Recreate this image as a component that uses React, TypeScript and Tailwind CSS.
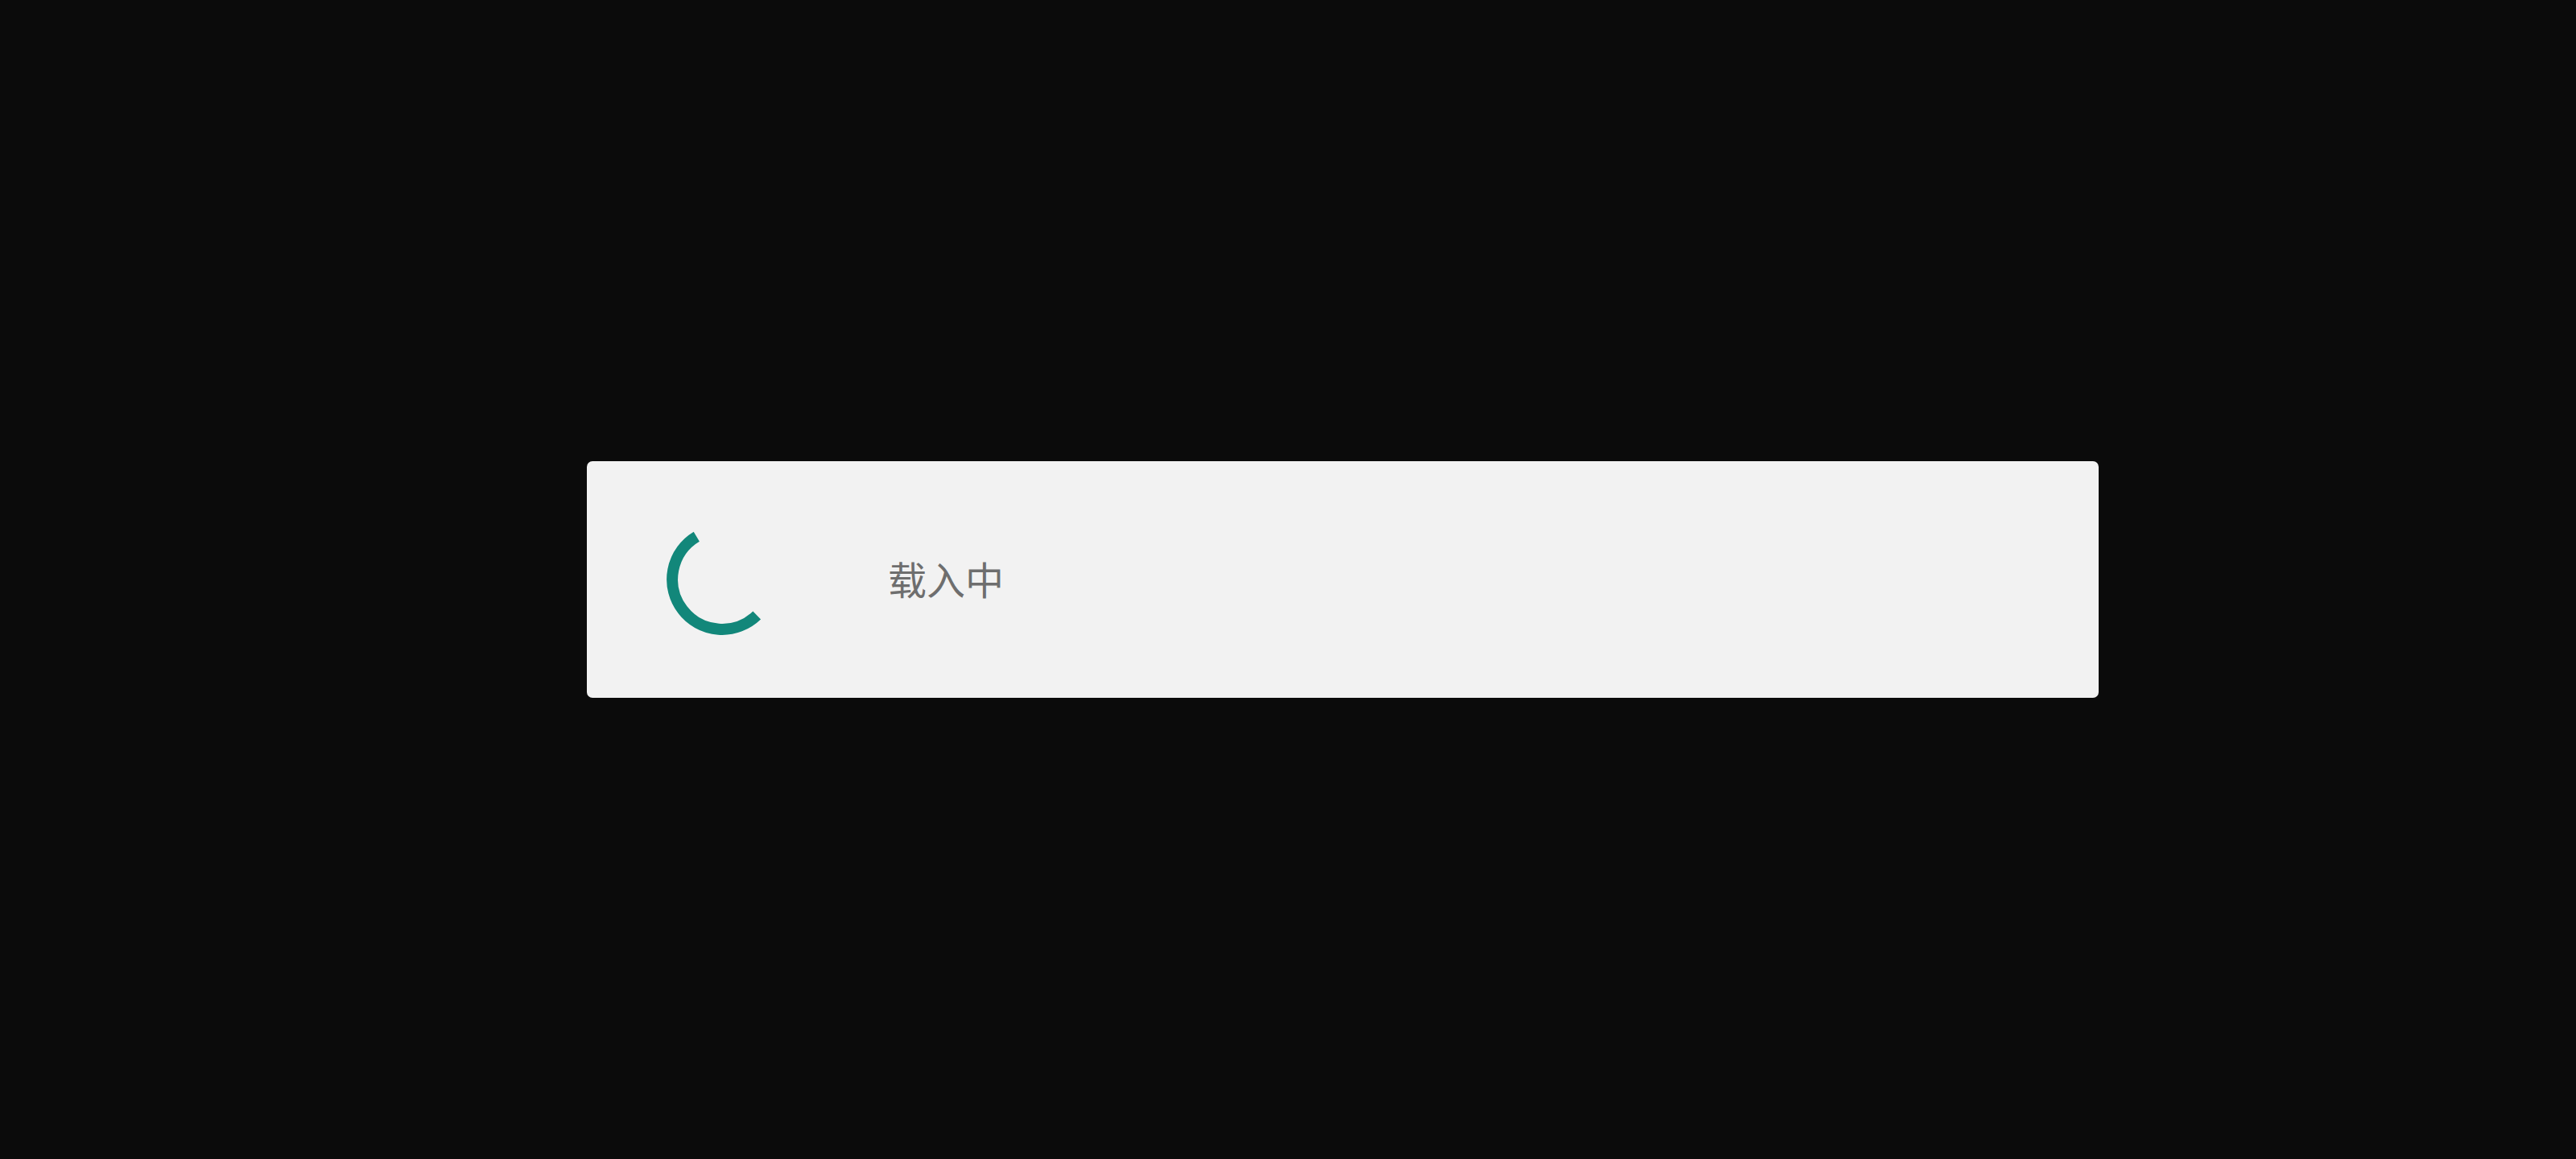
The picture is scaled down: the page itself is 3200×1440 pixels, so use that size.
export default function App() {
  return (
    <div className="flex h-screen w-full items-center bg-[#0b0b0b] pl-[729px]">
      <div className="flex h-[294px] w-[1878px] items-center rounded-[7px] bg-[#f2f2f2] pl-[98px]">
        <svg width="140" height="140" viewBox="0 0 140 140" className="shrink-0">
          <path
            d="M38.3 16.7 A62 62 0 1 0 113.2 114.5"
            fill="none"
            stroke="#12877a"
            strokeWidth="14"
          />
        </svg>
        <div
          className="mb-[4px] ml-[136px] text-[48px] leading-none font-normal text-[#6e6e6e]"
          style={{ fontFamily: '"Noto Sans CJK SC", sans-serif' }}
        >
          载入中
        </div>
      </div>
    </div>
  );
}
